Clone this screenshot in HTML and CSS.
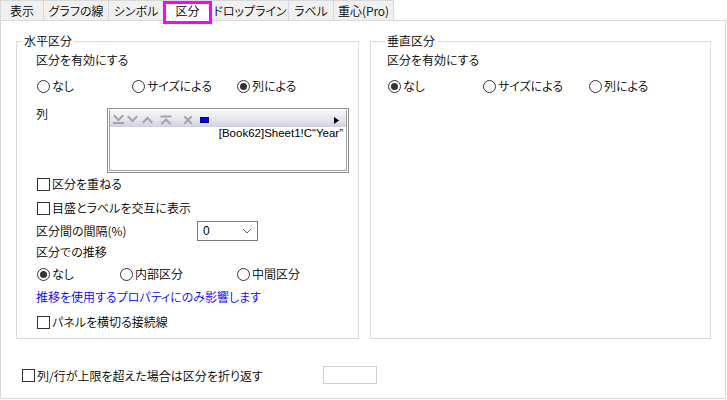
FILE: index.html
```html
<!DOCTYPE html>
<html lang="ja">
<head>
<meta charset="utf-8">
<link rel="stylesheet" href="styles.css">
</head>
<body>
<div class="dialog">
  <div class="tabs">
    <div class="tab t1">表示</div>
    <div class="tab t2">グラフの線</div>
    <div class="tab t3">シンボル</div>
    <div class="tab t4 active">区分<span class="highlight"></span></div>
    <div class="tab t5">ドロップライン</div>
    <div class="tab t6">ラベル</div>
    <div class="tab t7">重心(Pro)</div>
  </div>
  <div class="panel">
    <div class="groups">
      <fieldset class="group group-h">
        <legend>水平区分</legend>
        <div class="content">
          <div class="row">区分を有効にする</div>
          <div class="row m6 radios cols-a">
            <label class="opt"><span class="radio"></span>なし</label>
            <label class="opt"><span class="radio"></span>サイズによる</label>
            <label class="opt"><span class="radio checked"></span>列による</label>
          </div>
          <div class="row-list m12">
            <div class="list-label">列</div>
            <div class="listbox">
              <div class="list-inner">
                <div class="toolbar">
                  <svg class="tb-icons" width="237" height="17" viewBox="0 0 237 17">
                    <g fill="none" stroke="#a3a3b3" stroke-width="2" stroke-linecap="square">
                      <path d="M4.5 6 L8.5 10 L12.5 6"/>
                      <path d="M4 13 H13"/>
                      <path d="M18.5 7 L22.5 11 L26.5 7"/>
                      <path d="M33.5 12 L37.5 8 L41.5 12"/>
                      <path d="M51.5 6.5 H60.5"/>
                      <path d="M52 13.5 L56 9.5 L60 13.5"/>
                      <path d="M75 7 L81 13"/>
                      <path d="M81 7 L75 13"/>
                    </g>
                    <rect x="90.5" y="7.5" width="8" height="5" fill="#0000ff" stroke="#00007a" stroke-width="1"/>
                    <path d="M224 7 L229 10.5 L224 14 Z" fill="#000"/>
                  </svg>
                </div>
                <div class="list-item">[Book62]Sheet1!C“Year”</div>
              </div>
            </div>
          </div>
          <div class="row m1"><label class="opt"><span class="check"></span>区分を重ねる</label></div>
          <div class="row m4"><label class="opt"><span class="check"></span>目盛とラベルを交互に表示</label></div>
          <div class="row m3">
            <span class="field-label">区分間の間隔(%)</span>
            <div class="combo">
              <span class="combo-val">0</span>
              <svg class="chev" width="10" height="6" viewBox="0 0 10 6"><path d="M1 1 L5 5 L9 1" fill="none" stroke="#606060" stroke-width="1"/></svg>
            </div>
          </div>
          <div class="row m1">区分での推移</div>
          <div class="row m2 radios cols-b">
            <label class="opt"><span class="radio checked"></span>なし</label>
            <label class="opt"><span class="radio"></span>内部区分</label>
            <label class="opt"><span class="radio"></span>中間区分</label>
          </div>
          <div class="row m3 note">推移を使用するプロパティにのみ影響します</div>
          <div class="row m5"><label class="opt"><span class="check"></span>パネルを横切る接続線</label></div>
        </div>
      </fieldset>
      <fieldset class="group group-v">
        <legend>垂直区分</legend>
        <div class="content">
          <div class="row">区分を有効にする</div>
          <div class="row m6 radios cols-c">
            <label class="opt"><span class="radio checked"></span>なし</label>
            <label class="opt"><span class="radio"></span>サイズによる</label>
            <label class="opt"><span class="radio"></span>列による</label>
          </div>
        </div>
      </fieldset>
    </div>
    <div class="bottom-row">
      <label class="opt wrap-label"><span class="check"></span>列/行が上限を超えた場合は区分を折り返す</label>
      <div class="textbox"></div>
    </div>
  </div>
</div>
</body>
</html>
```
FILE: styles.css
```css
body {
  margin: 0;
  background: #ffffff;
  font-family: "Noto Sans CJK JP", "Noto Sans", sans-serif;
  font-size: 12px;
  font-weight: 350;
  font-feature-settings: "palt";
  color: #000;
}

.dialog {
  width: 727px;
  height: 400px;
  position: relative;
  overflow: hidden;
}

/* Tabs */
.tabs {
  display: flex;
  height: 20px;
  position: relative;
  z-index: 2;
}
.tab {
  box-sizing: border-box;
  height: 20px;
  border-top: 1px solid #d9d9d9;
  border-right: 1px solid #d9d9d9;
  background: #f0f0f0;
  text-align: center;
  line-height: 19px;
  white-space: nowrap;
}
.t1 { width: 44px; border-left: 1px solid #d9d9d9; }
.t2 { width: 65px; }
.t3 { width: 55px; }
.t4 { width: 48px; }
.t5 { width: 77px; }
.t6 { width: 45px; }
.t7 { width: 60px; }
.tab.active {
  background: #ffffff;
  position: relative;
  height: 21px;
}
.highlight {
  position: absolute;
  left: -1px;
  top: 0;
  width: 49px;
  height: 23px;
  box-sizing: border-box;
  border: 3px solid #ff00ff;
}

/* Panel */
.panel {
  box-sizing: border-box;
  width: 726px;
  height: 379px;
  border: 1px solid #d9d9d9;
  background: #ffffff;
  padding: 13px 0 0 15px;
  position: relative;
  z-index: 1;
}
.groups {
  display: flex;
  gap: 11px;
}
.group {
  box-sizing: border-box;
  margin: 0;
  padding: 2px 0 0 0;
  min-width: 0;
  height: 305px;
  border: 1px solid #dcdcdc;
}
.group-h { width: 343px; }
.group-v { width: 341px; }
.group legend {
  padding: 0 2px;
  line-height: 14px;
  font-size: 12px;
}
.group-h legend { margin-left: 5px; }
.group-v legend { margin-left: 14px; }
.group-h .content { padding-left: 19px; }
.group-v .content { padding-left: 16px; }

.row {
  height: 20px;
  line-height: 20px;
  display: flex;
  align-items: center;
  white-space: nowrap;
}
.m1 { margin-top: 1px; }
.m2 { margin-top: 2px; }
.m3 { margin-top: 3px; }
.m4 { margin-top: 4px; }
.m5 { margin-top: 5px; }
.m6 { margin-top: 6px; }
.m12 { margin-top: 12px; }

.radios { display: grid; }
.cols-a { grid-template-columns: 95px 105px auto; }
.cols-b { grid-template-columns: 83px 117px auto; }
.cols-c { grid-template-columns: 95px 106px auto; }

.opt {
  display: flex;
  align-items: center;
  white-space: nowrap;
}
.radio {
  box-sizing: border-box;
  width: 13px;
  height: 13px;
  border: 1px solid #333333;
  border-radius: 50%;
  margin-left: 1px;
  margin-right: 2px;
  display: flex;
  align-items: center;
  justify-content: center;
  flex: none;
}
.radio.checked::after {
  content: "";
  width: 7px;
  height: 7px;
  border-radius: 50%;
  background: #333333;
}
.check {
  box-sizing: border-box;
  width: 13px;
  height: 13px;
  border: 1px solid #333333;
  margin-left: 1px;
  margin-right: 2px;
  flex: none;
}

/* Column list */
.row-list {
  display: flex;
  align-items: flex-start;
}
.list-label {
  width: 71px;
  line-height: 12px;
}
.listbox {
  box-sizing: border-box;
  width: 242px;
  height: 65px;
  border: 1px solid #8e8e8e;
  padding: 1px;
  background: #ffffff;
}
.list-inner {
  box-sizing: border-box;
  height: 100%;
  border-left: 1px solid #a0a0a0;
  border-right: 1px solid #a0a0a0;
  border-bottom: 1px solid #a0a0a0;
}
.toolbar {
  height: 17px;
  background: linear-gradient(#f7f7fa, #e4e4ec 60%, #d0d0dc);
}
.tb-icons { display: block; }
.list-item {
  font-family: "Liberation Sans", Arial, sans-serif;
  font-weight: 400;
  font-size: 11.5px;
  line-height: 14px;
  text-align: right;
  padding-right: 3px;
  margin-top: -1px;
}

/* Combo */
.field-label {
  width: 161px;
}
.combo {
  box-sizing: border-box;
  width: 61px;
  height: 20px;
  border: 1px solid #7a7a7a;
  background: #fff;
  display: flex;
  align-items: center;
  justify-content: space-between;
  padding: 0 5px 0 5px;
}
.combo-val {
  font-family: "Liberation Sans", Arial, sans-serif;
  font-weight: 400;
  line-height: 16px;
}
.chev { display: block; }

.note { color: #0000ff; }

/* Bottom */
.bottom-row {
  display: flex;
  align-items: center;
  margin-top: 26px;
  margin-left: 6px;
  height: 20px;
}
.wrap-label {
  width: 301px;
}
.wrap-label .check { margin-left: 0; margin-right: 2px; }
.textbox {
  box-sizing: border-box;
  width: 54px;
  height: 18px;
  border: 1px solid #cfcfcf;
  background: #ffffff;
}
```
